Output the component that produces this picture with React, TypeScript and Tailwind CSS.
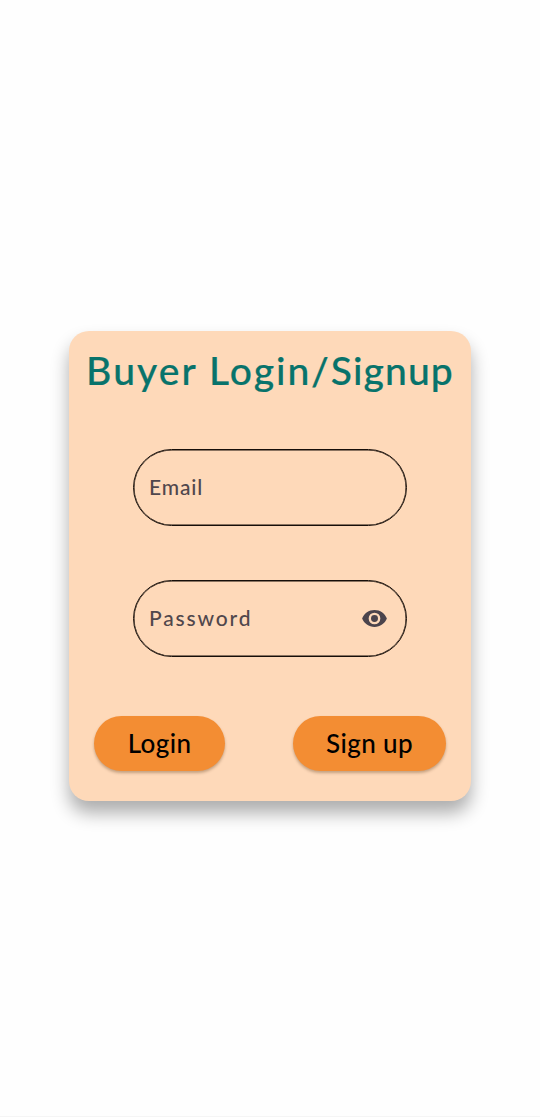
import { useState } from "react";

function EyeIcon() {
  return (
    <svg viewBox="0 0 24 24" className="h-[27px] w-[27px] shrink-0" fill="#4b444c">
      <path d="M12 4.5C7 4.5 2.73 7.61 1 12c1.73 4.39 6 7.5 11 7.5s9.27-3.11 11-7.5c-1.73-4.39-6-7.5-11-7.5zM12 17.2a5.2 5.2 0 1 1 0-10.4 5.2 5.2 0 0 1 0 10.4zm0-8.3a3.1 3.1 0 1 0 0 6.2 3.1 3.1 0 0 0 0-6.2z" />
    </svg>
  );
}

export default function App() {
  const [visible, setVisible] = useState(false);
  const field =
    "min-w-0 flex-1 bg-transparent pb-[2px] text-[21px] font-medium text-[#50474c] outline-none placeholder:text-[#50474c] placeholder:opacity-100";
  const outline =
    "flex h-[77px] w-[274px] items-center rounded-full border border-[#160e09] pr-[18px] pl-[15px] shadow-[inset_0_0_0_0.5px_#160e09]";
  const button =
    "h-[55px] rounded-full bg-[#f38d33] pb-px text-[26px] font-medium tracking-[0.4px] text-black shadow-[0_2px_3px_rgba(70,40,10,0.32)]";

  return (
    <main className="flex h-[1117px] w-full flex-col items-center border-b border-[#f5f5f5] bg-[#fefefe] pt-[331px] font-['Lato',sans-serif]">
      <form
        className="flex h-[470px] w-[402px] flex-col items-center rounded-[20px] bg-[#fed9b9] pt-[14px] shadow-[0_12px_18px_rgba(0,0,0,0.32)]"
        onSubmit={(event) => event.preventDefault()}
      >
        <h1 className="h-[50px] whitespace-nowrap text-[39px] leading-[50px] font-medium text-[#08736b] [-webkit-text-stroke:0.2px_#08736b]">
          <span className="tracking-[2.1px]">Buyer </span>
          <span className="tracking-[1.9px]">Login/</span>
          <span className="tracking-[1.1px]">Signup</span>
        </h1>
        <label className={outline + " mt-[54px]"}>
          <input type="email" aria-label="Email" placeholder="Email" className={field + " tracking-[0.85px]"} />
        </label>
        <div className={outline + " mt-[54px]"}>
          <input
            type={visible ? "text" : "password"}
            aria-label="Password"
            placeholder="Password"
            className={field + " tracking-[1.85px]"}
          />
          <button type="button" aria-label="Toggle password visibility" onClick={() => setVisible(!visible)}>
            <EyeIcon />
          </button>
        </div>
        <div className="mt-[59px] flex w-[352px] justify-between">
          <button type="submit" className={button + " w-[131px]"}>
            Login
          </button>
          <button type="button" className={button + " w-[153px]"}>
            Sign up
          </button>
        </div>
      </form>
    </main>
  );
}
